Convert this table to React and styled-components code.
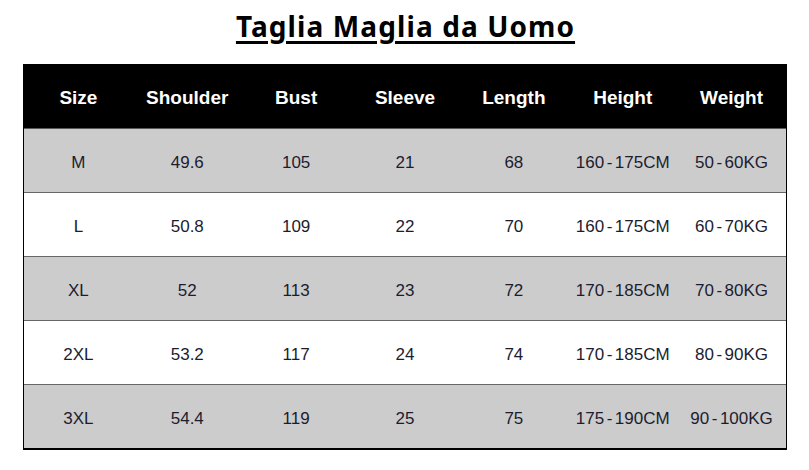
import React from 'react';
import styled, { createGlobalStyle } from 'styled-components';

const GlobalStyle = createGlobalStyle`
  html, body {
    margin: 0;
    padding: 0;
    background: #ffffff;
  }
`;

const columns = ['Size', 'Shoulder', 'Bust', 'Sleeve', 'Length', 'Height', 'Weight'];

const rows = [
  ['M', '49.6', '105', '21', '68', '160-175CM', '50-60KG'],
  ['L', '50.8', '109', '22', '70', '160-175CM', '60-70KG'],
  ['XL', '52', '113', '23', '72', '170-185CM', '70-80KG'],
  ['2XL', '53.2', '117', '24', '74', '170-185CM', '80-90KG'],
  ['3XL', '54.4', '119', '25', '75', '175-190CM', '90-100KG']
];

// ranges like 160-175CM use a wide dash in the original
function CellValue({ value }) {
  const parts = value.split('-');
  if (parts.length === 1) return value;
  return (
    <>
      {parts[0]}
      <Dash>-</Dash>
      {parts[1]}
    </>
  );
}

export default function App() {
  return (
    <Page>
      <GlobalStyle />
      <Title>Taglia Maglia da Uomo</Title>
      <Table>
        <HeaderRow>
          {columns.map(col => (
            <HeadCell key={col}>{col}</HeadCell>
          ))}
        </HeaderRow>
        {rows.map((row, i) => (
          <Row key={row[0]} $shaded={i % 2 === 0} $last={i === rows.length - 1}>
            {row.map((value, j) => (
              <Cell key={j}>
                <CellValue value={value} />
              </Cell>
            ))}
          </Row>
        ))}
      </Table>
    </Page>
  );
}

const Page = styled.div`
  width: 809px;
  height: 470px;
  display: flex;
  flex-direction: column;
  align-items: flex-start;
  background: #fff;
`;

const Title = styled.h1`
  align-self: center;
  margin: 0 0 0 2px;
  height: 64px;
  padding-top: 7px;
  box-sizing: border-box;
  font-family: 'Noto Sans', 'Open Sans', sans-serif;
  font-size: 28px;
  font-weight: 700;
  letter-spacing: 1.1px;
  line-height: 38px;
  color: #000;
  text-decoration: underline;
  text-decoration-thickness: 3px;
  text-underline-offset: 4px;
`;

const Table = styled.div`
  margin-left: 23px;
  width: 764px;
  box-sizing: border-box;
  border: 1px solid #000;
  border-bottom-width: 2px;
  display: flex;
  flex-direction: column;
`;

const grid = `
  display: grid;
  grid-template-columns: repeat(7, 1fr);
  align-items: center;
  box-sizing: border-box;
`;

const HeaderRow = styled.div`
  ${grid}
  height: 64px;
  padding-top: 2px;
  background: #000;
  border-bottom: 1px solid #5a5a5a;
`;

const HeadCell = styled.div`
  text-align: center;
  font-family: 'Liberation Sans', Arial, sans-serif;
  font-weight: 700;
  font-size: 19px;
  color: #fff;
`;

const Row = styled.div`
  ${grid}
  height: ${p => (p.$last ? 63 : 64)}px;
  padding-top: 5px;
  background: ${p => (p.$shaded ? '#cccccc' : '#ffffff')};
  border-bottom: ${p => (p.$last ? 'none' : '1px solid #666666')};
`;

const Cell = styled.div`
  text-align: center;
  font-family: 'Liberation Sans', Arial, sans-serif;
  font-size: 17px;
  color: #1c1c30;
  white-space: nowrap;
`;

const Dash = styled.span`
  padding: 0 2.5px;
`;
